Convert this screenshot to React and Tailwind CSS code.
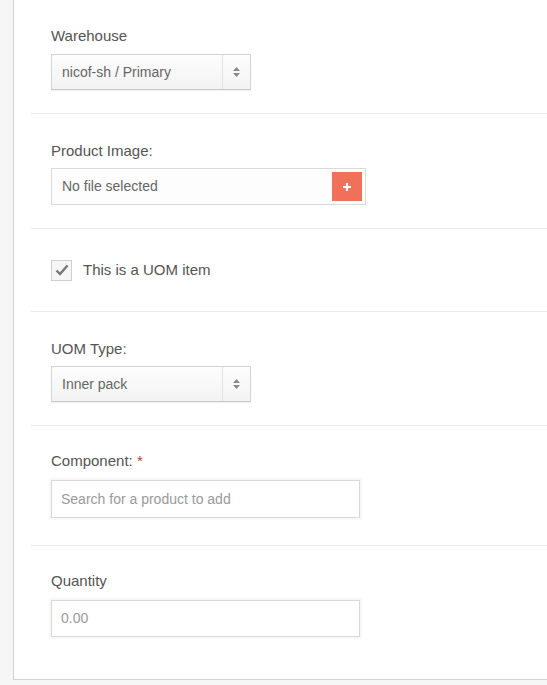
import React from "react";

function SelectBox({ value }) {
  return (
    <div className="flex h-[36px] w-[200px] border border-[#d4d4d4] border-b-[#c8c8c8] bg-gradient-to-b from-[#fdfdfd] to-[#f3f3f3] shadow-[0_1px_1px_rgba(0,0,0,0.05)]">
      <div className="flex flex-1 items-center pl-[10px] text-[14px] text-[#666]">{value}</div>
      <div className="flex w-[28px] flex-col items-center justify-center gap-[2px] border-l border-[#e2e2e2]">
        <svg width="7" height="4" viewBox="0 0 7 4"><path d="M0 4 L3.5 0 L7 4 Z" fill="#8a8a8a" /></svg>
        <svg width="7" height="4" viewBox="0 0 7 4"><path d="M0 0 L3.5 4 L7 0 Z" fill="#8a8a8a" /></svg>
      </div>
    </div>
  );
}

function Label({ children }) {
  return <div className="h-[20px] text-[15px] leading-[20px] text-[#555]">{children}</div>;
}

export default function App() {
  return (
    <div className="min-h-[685px] w-[547px] bg-[#f6f6f6]" style={{ fontFamily: '"Liberation Sans", Arial, sans-serif' }}>
      <div className="ml-[13px] h-[680px] border-b border-l border-[#d2d2d2] bg-white pl-[17px]">
        <div className="pt-[26px] pb-[23px] pl-[20px]">
          <Label>Warehouse</Label>
          <div className="mt-[8px]">
            <SelectBox value="nicof-sh / Primary" />
          </div>
        </div>
        <div className="border-t border-[#ebebeb] pt-[27px] pb-[23px] pl-[20px]">
          <Label>Product Image:</Label>
          <div className="mt-[7px] flex h-[37px] w-[315px] items-center border border-[#dadada] bg-[#fdfdfd] pl-[10px] pr-[3px]">
            <div className="flex-1 text-[14px] text-[#666]">No file selected</div>
            <div className="flex h-[29px] w-[30px] items-center justify-center bg-[#f07059]">
              <svg width="10" height="10" viewBox="0 0 10 10"><path d="M5 1 V9 M1 5 H9" stroke="#fff" strokeWidth="2.2" /></svg>
            </div>
          </div>
        </div>
        <div className="flex h-[83px] items-center border-t border-[#ebebeb] pl-[20px]">
          <div className="flex h-[21px] w-[21px] items-center justify-center border border-[#d0d0d0] bg-[#f6f6f6]">
            <svg width="14" height="12" viewBox="0 0 14 12"><path d="M1.5 6.5 L5 10 L12.5 1.5" fill="none" stroke="#777" strokeWidth="2.4" /></svg>
          </div>
          <div className="ml-[11px] text-[15px] leading-[20px] text-[#555]">This is a UOM item</div>
        </div>
        <div className="border-t border-[#ebebeb] pt-[27px] pb-[23px] pl-[20px]">
          <Label>UOM Type:</Label>
          <div className="mt-[7px]">
            <SelectBox value="Inner pack" />
          </div>
        </div>
        <div className="border-t border-[#ebebeb] pt-[25px] pb-[27px] pl-[20px]">
          <Label>
            Component: <span className="text-[#b5473a]">*</span>
          </Label>
          <div className="mt-[9px] flex h-[38px] w-[309px] items-center border border-[#d8d8d8] bg-white pl-[9px] text-[14px] text-[#9a9a9a] shadow-[0_0_0_2px_#f8f8f8]">
            Search for a product to add
          </div>
        </div>
        <div className="border-t border-[#ebebeb] pt-[25px] pl-[20px]">
          <Label>Quantity</Label>
          <div className="mt-[9px] flex h-[37px] w-[309px] items-center border border-[#d8d8d8] bg-white pl-[9px] text-[14px] text-[#9a9a9a] shadow-[0_0_0_2px_#f8f8f8]">
            0.00
          </div>
        </div>
      </div>
    </div>
  );
}
